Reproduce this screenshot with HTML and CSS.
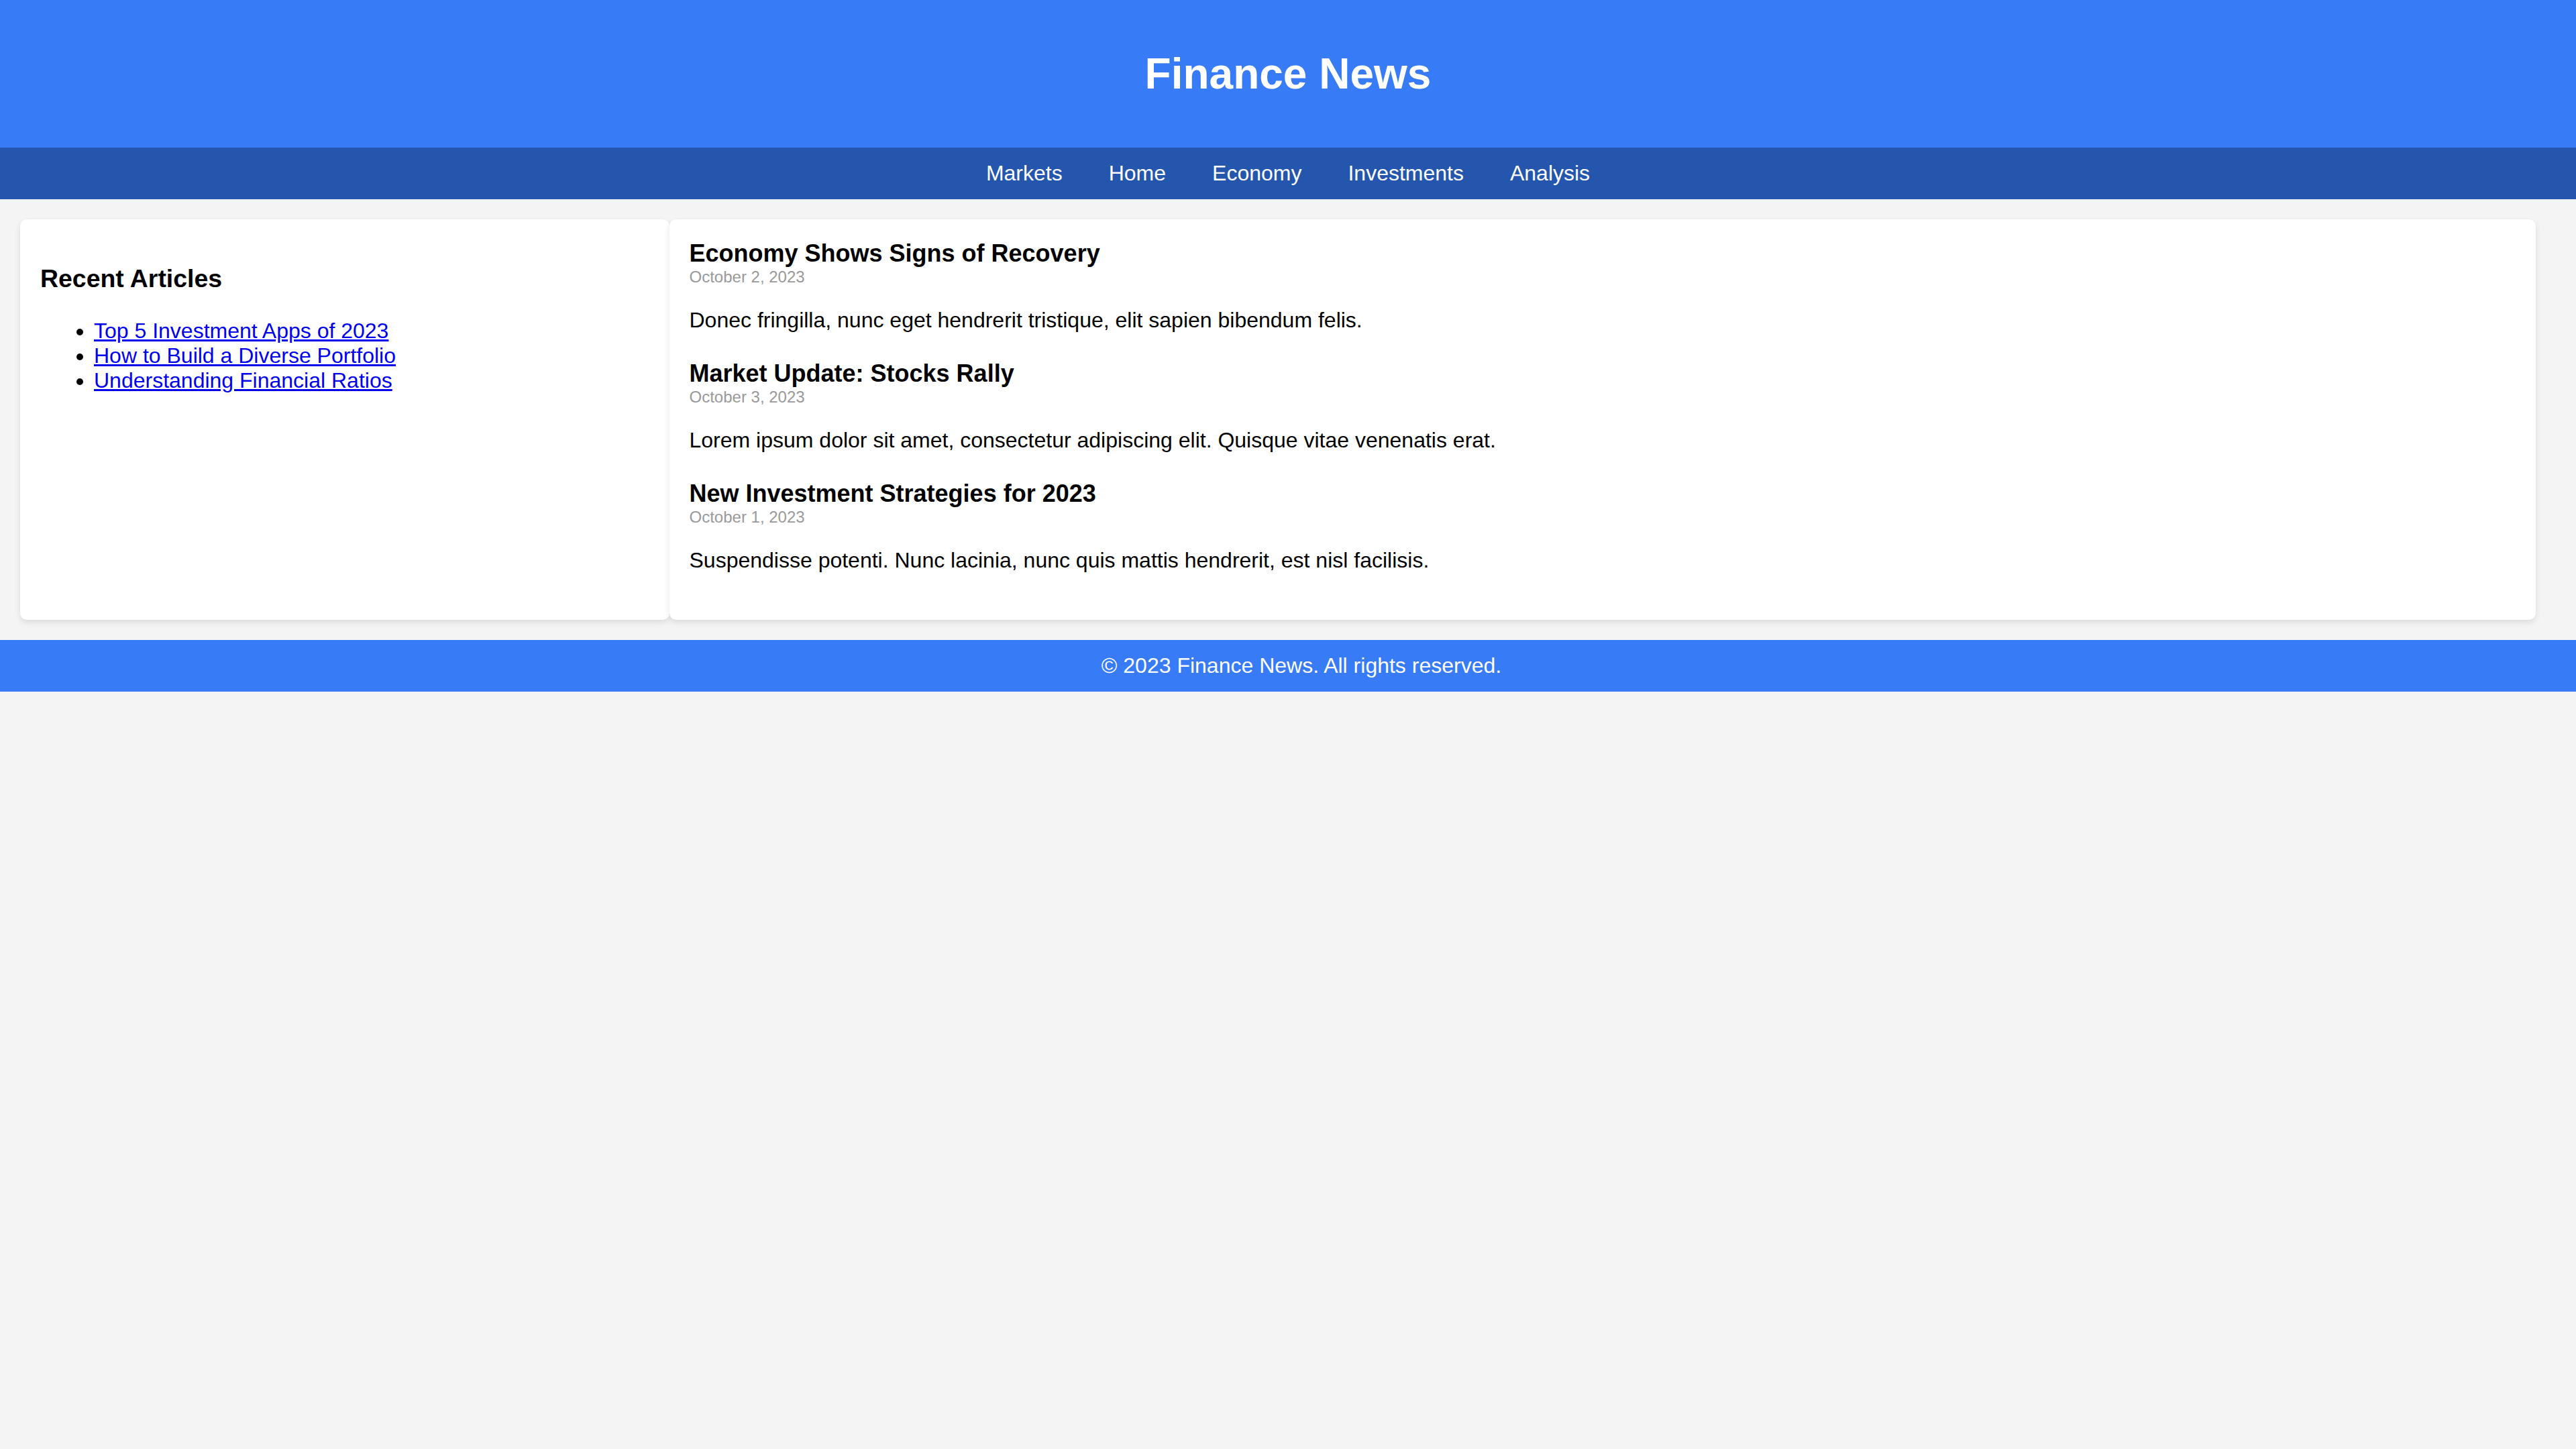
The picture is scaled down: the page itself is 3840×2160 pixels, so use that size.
FILE: index.html
```html
<!DOCTYPE html>
<html lang="en">
<head>
<meta charset="utf-8">
<title>Finance News</title>
<link rel="stylesheet" href="styles.css">
</head>
<body>
<header class="site-header">
  <h1 class="site-title">Finance News</h1>
</header>
<nav class="site-nav">
  <a class="nav-link" href="#">Markets</a>
  <a class="nav-link" href="#">Home</a>
  <a class="nav-link" href="#">Economy</a>
  <a class="nav-link" href="#">Investments</a>
  <a class="nav-link" href="#">Analysis</a>
</nav>
<main class="layout">
  <aside class="sidebar card">
    <h3 class="sidebar-title">Recent Articles</h3>
    <ul class="recent-list">
      <li><a href="#">Top 5 Investment Apps of 2023</a></li>
      <li><a href="#">How to Build a Diverse Portfolio</a></li>
      <li><a href="#">Understanding Financial Ratios</a></li>
    </ul>
  </aside>
  <section class="articles card">
    <article class="article">
      <h2 class="article-title">Economy Shows Signs of Recovery</h2>
      <div class="article-date">October 2, 2023</div>
      <p class="article-body">Donec fringilla, nunc eget hendrerit tristique, elit sapien bibendum felis.</p>
    </article>
    <article class="article">
      <h2 class="article-title">Market Update: Stocks Rally</h2>
      <div class="article-date">October 3, 2023</div>
      <p class="article-body">Lorem ipsum dolor sit amet, consectetur adipiscing elit. Quisque vitae venenatis erat.</p>
    </article>
    <article class="article">
      <h2 class="article-title">New Investment Strategies for 2023</h2>
      <div class="article-date">October 1, 2023</div>
      <p class="article-body">Suspendisse potenti. Nunc lacinia, nunc quis mattis hendrerit, est nisl facilisis.</p>
    </article>
  </section>
</main>
<footer class="site-footer">&copy; 2023 Finance News. All rights reserved.</footer>
</body>
</html>
```

FILE: styles.css
```css
html, body {
  margin: 0;
  padding: 0;
}

body {
  font-family: "Liberation Sans", Arial, Helvetica, sans-serif;
  font-size: 32px;
  background: #f4f4f4;
  color: #000;
}

.site-header {
  background: #377bf6;
  color: #fff;
  text-align: center;
  padding: 73px 0;
}

.site-title {
  margin: 0;
  font-size: 64px;
  line-height: 74px;
  font-weight: bold;
}

.site-nav {
  background: #2456ad;
  display: flex;
  justify-content: center;
  gap: 69px;
  padding: 20px 0;
}

.nav-link {
  color: #fff;
  text-decoration: none;
  font-size: 32px;
}

.layout {
  display: flex;
  align-items: stretch;
  padding: 30px 60px 30px 30px;
}

.card {
  background: #fff;
  border-radius: 10px;
  box-shadow: 0 4px 10px rgba(0, 0, 0, 0.1);
  padding: 30px;
}

.sidebar {
  flex: 1 1 0;
}

.articles {
  flex: 3 1 0;
}

.sidebar-title {
  font-size: 37.44px;
  margin: 37.44px 0;
}

.recent-list {
  margin: 32px 0;
  padding-left: 80px;
}

.recent-list a {
  color: #0000ee;
}

.article {
  margin-bottom: 40px;
}

.article-title {
  margin: 0;
  font-size: 36px;
  font-weight: bold;
}

.article-date {
  font-size: 24px;
  color: #999;
}

.article-body {
  margin: 32px 0;
}

.site-footer {
  background: #377bf6;
  color: #fff;
  text-align: center;
  padding: 20px 0 20px 40px;
}
```
